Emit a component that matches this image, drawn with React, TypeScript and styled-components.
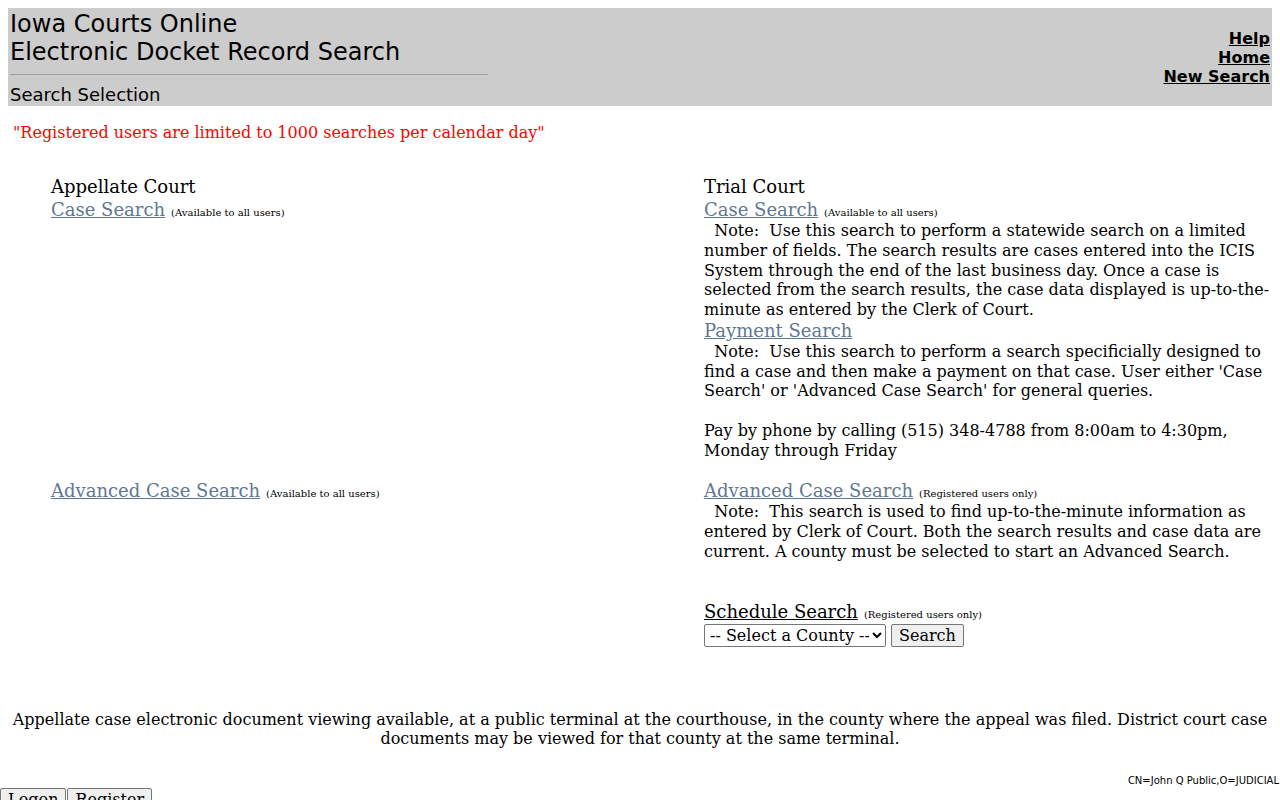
import React from "react";
import styled, { createGlobalStyle } from "styled-components";

const Global = createGlobalStyle`
  html, body { margin: 0; padding: 0; background: #fff; }
  body { font-family: "DejaVu Serif", serif; font-size: 16px; color: #000; }
`;

const Page = styled.div`
  padding: 8px 8px 0 8px;
`;

const Header = styled.div`
  background: #cccccc;
  display: flex;
  justify-content: space-between;
  align-items: center;
  padding: 2px 2px 1px 2px;
  font-family: "DejaVu Sans", Verdana, sans-serif;
`;

const TitleBlock = styled.div`
  display: flex;
  flex-direction: column;
`;

const Title = styled.div`
  font-size: 24px;
  line-height: 28px;
`;

const Rule = styled.div`
  width: 478px;
  border-top: 1px solid #a0a0a0;
  margin: 8px 0 9px 0;
`;

const SubTitle = styled.div`
  font-size: 18px;
  line-height: 21px;
`;

const NavLinks = styled.div`
  display: flex;
  flex-direction: column;
  align-items: flex-end;
`;

const NavLink = styled.a`
  font-size: 16px;
  line-height: 19px;
  font-weight: bold;
  color: #000;
  text-decoration: underline;
  cursor: pointer;
`;

const Notice = styled.div`
  color: #ff0000;
  font-size: 16px;
  line-height: 19px;
  padding: 17px 5px 0 5px;
`;

const Grid = styled.div`
  display: grid;
  grid-template-columns: 653px 1fr;
  padding: 32px 0 0 43px;
  font-size: 16px;
  line-height: 19.75px;
`;

const Cell = styled.div`
  display: flex;
  flex-direction: column;
`;

const Heading = styled.div`
  font-size: 18px;
  line-height: 25px;
`;

const LinkRow = styled.div`
  line-height: 22px;
  height: 22px;
  white-space: nowrap;
`;

const SearchLink = styled.a<{ $dark?: boolean }>`
  font-size: 18px;
  line-height: 22px;
  color: ${(p) => (p.$dark ? "#000" : "#5f7891")};
  text-decoration: underline;
  cursor: pointer;
`;

const Avail = styled.span`
  font-size: 10px;
  line-height: 10px;
  margin-left: 6px;
`;

const Note = styled.div`
  line-height: 19.75px;
`;

const Blank = styled.div`
  height: 19.75px;
`;

const Controls = styled.div`
  display: flex;
  align-items: center;
  gap: 5px;
  margin-top: 1px;
`;

const Select = styled.select`
  font-family: "DejaVu Serif", serif;
  font-size: 16px;
  width: 182px;
  height: 23px;
  border: 1px solid #767676;
  border-radius: 2px;
  background: #fff;
  color: #000;
  padding: 0 0 0 1px;
`;

const Button = styled.button`
  font-family: "DejaVu Serif", serif;
  font-size: 16px;
  line-height: 19px;
  padding: 1px 7px;
  border: 1px solid #767676;
  border-radius: 2px;
  background: #efefef;
  color: #000;
`;

const FooterText = styled.div`
  text-align: center;
  font-size: 16px;
  line-height: 19px;
  padding: 63px 0 0 0;
`;

const Bottom = styled.div`
  display: flex;
  flex-direction: column;
`;

const Identity = styled.div`
  font-family: "DejaVu Sans", Verdana, sans-serif;
  font-size: 10px;
  line-height: 12px;
  text-align: right;
  padding: 27px 1px 1px 0;
`;

const ButtonRow = styled.div`
  display: flex;
  gap: 1px;
`;

export default function App() {
  return (
    <>
      <Global />
      <Page>
        <Header>
          <TitleBlock>
            <Title>Iowa Courts Online</Title>
            <Title>Electronic Docket Record Search</Title>
            <Rule />
            <SubTitle>Search Selection</SubTitle>
          </TitleBlock>
          <NavLinks>
            <NavLink>Help</NavLink>
            <NavLink>Home</NavLink>
            <NavLink>New Search</NavLink>
          </NavLinks>
        </Header>

        <Notice>"Registered users are limited to 1000 searches per calendar day"</Notice>

        <Grid>
          <Cell>
            <Heading>Appellate Court</Heading>
            <LinkRow>
              <SearchLink>Case Search</SearchLink>
              <Avail>(Available to all users)</Avail>
            </LinkRow>
          </Cell>
          <Cell>
            <Heading>Trial Court</Heading>
            <LinkRow>
              <SearchLink>Case Search</SearchLink>
              <Avail>(Available to all users)</Avail>
            </LinkRow>
            <Note>
              &nbsp;&nbsp;Note:&nbsp; Use this search to perform a statewide search on a limited number of
              fields. The search results are cases entered into the ICIS System through the end of the last
              business day. Once a case is selected from the search results, the case data displayed is
              up-to-the-minute as entered by the Clerk of Court.
            </Note>
            <LinkRow>
              <SearchLink>Payment Search</SearchLink>
            </LinkRow>
            <Note>
              &nbsp;&nbsp;Note:&nbsp; Use this search to perform a search specificially designed to find a
              case and then make a payment on that case. User either 'Case Search' or 'Advanced Case Search'
              for general queries.
            </Note>
            <Blank />
            <Note>Pay by phone by calling (515) 348-4788 from 8:00am to 4:30pm, Monday through Friday</Note>
            <Blank />
          </Cell>

          <Cell>
            <LinkRow>
              <SearchLink>Advanced Case Search</SearchLink>
              <Avail>(Available to all users)</Avail>
            </LinkRow>
          </Cell>
          <Cell>
            <LinkRow>
              <SearchLink>Advanced Case Search</SearchLink>
              <Avail>(Registered users only)</Avail>
            </LinkRow>
            <Note>
              &nbsp;&nbsp;Note:&nbsp; This search is used to find up-to-the-minute information as entered by
              Clerk of Court. Both the search results and case data are current. A county must be selected to
              start an Advanced Search.
            </Note>
            <Blank />
            <Blank />
          </Cell>

          <Cell />
          <Cell>
            <LinkRow>
              <SearchLink $dark>Schedule Search</SearchLink>
              <Avail>(Registered users only)</Avail>
            </LinkRow>
            <Controls>
              <Select defaultValue="">
                <option value="">-- Select a County --</option>
              </Select>
              <Button>Search</Button>
            </Controls>
          </Cell>
        </Grid>

        <FooterText>
          Appellate case electronic document viewing available, at a public terminal at the courthouse, in the
          county where the appeal was filed. District court case documents may be viewed for that county at the
          same terminal.
        </FooterText>
      </Page>
      <Bottom>
        <Identity>CN=John Q Public,O=JUDICIAL</Identity>
        <ButtonRow>
          <Button>Logon</Button>
          <Button>Register</Button>
        </ButtonRow>
      </Bottom>
    </>
  );
}
